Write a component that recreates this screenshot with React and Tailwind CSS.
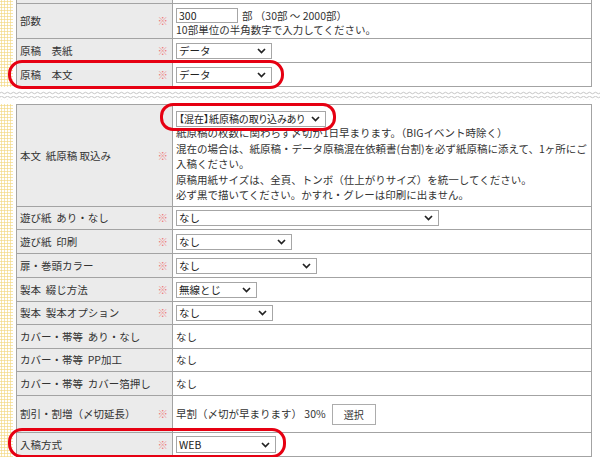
import React from "react";

// form table excerpt with red highlight marks
const Chevron = () => (
  <svg width="9" height="6" viewBox="0 0 9 6" className="shrink-0">
    <path d="M1 1l3.5 3.5L8 1" fill="none" stroke="#222" strokeWidth="1.7" />
  </svg>
);

const Sel = ({ w, h = "h-[16px]", tight = "", children }) => (
  <div className={`flex items-center justify-between border border-[#a6a6a6] bg-white pl-[2px] pr-[5px] ${w} ${h}`}>
    <span className={`whitespace-nowrap leading-[14px] text-[#222] ${tight}`}>{children}</span>
    <Chevron />
  </div>
);

const Row = ({ label, req, h, children, valueClass = "items-center" }) => (
  <div className={`flex border-b border-[#a3a3a3] ${h}`}>
    <div className="flex w-[156px] shrink-0 items-center justify-between border-r border-[#a3a3a3] bg-[#ebebeb] pl-[3px] pr-[4px]">
      <span className="whitespace-pre text-[#333]">{label}</span>
      {req && <span className="text-[#ee7b7b]">※</span>}
    </div>
    <div className={`flex flex-1 pl-[3px] ${valueClass}`}>{children}</div>
  </div>
);

const Dots = () => (
  <div className="w-[13px] shrink-0 bg-[radial-gradient(circle,#f4dc8f_0.9px,transparent_1.3px)] bg-[length:3px_3px]" />
);

const Wave = () => (
  <svg width="600" height="17" className="block">
    <defs>
      <pattern id="wv" width="6" height="4" patternUnits="userSpaceOnUse">
        <path d="M0 2 Q1.5 0.5 3 2 T6 2" fill="none" stroke="#c4c4c4" strokeWidth="1" />
      </pattern>
    </defs>
    <rect x="0" y="4" width="600" height="4" fill="url(#wv)" />
    <rect x="0" y="9" width="600" height="4" fill="url(#wv)" />
  </svg>
);

export default function App() {
  return (
    <div className="relative h-[457px] w-[600px] overflow-hidden bg-white text-[10.5px] text-[#333] font-['Noto_Sans_CJK_JP','Noto_Sans',sans-serif]">
      {/* upper part */}
      <div className="flex h-[87px]">
        <Dots />
        <div className="w-[3px] shrink-0" />
        <div className="w-[576px] border-x border-[#a3a3a3]">
          <Row label="" h="h-[4px]" />
          <Row label="部数" req h="h-[35px]" valueClass="flex-col items-start pt-[4px]">
            <div className="flex items-center">
              <div className="flex h-[15px] w-[62px] items-center border border-[#a6a6a6] pl-[2px] text-[#222]">300</div>
              <span className="ml-[4px] whitespace-pre">部 （30部 ～ 2000部）</span>
            </div>
            <div className="leading-[12px]">10部単位の半角数字で入力してください。</div>
          </Row>
          <Row label="原稿　表紙" req h="h-[24px]">
            <Sel w="w-[96px]">データ</Sel>
          </Row>
          <Row label="原稿　本文" req h="h-[24px]">
            <Sel w="w-[96px]">データ</Sel>
          </Row>
        </div>
      </div>

      <Wave />

      {/* lower part */}
      <div className="flex h-[353px]">
        <Dots />
        <div className="w-[3px] shrink-0" />
        <div className="w-[576px] border-x border-t border-[#a3a3a3]">
          <Row label="本文  紙原稿 取込み" req h="h-[102px]" valueClass="flex-col items-start pt-[6px] pl-[2px]">
            <Sel w="w-[150px]" tight="text-[10px] [font-feature-settings:'palt']">【混在】紙原稿の取り込みあり</Sel>
            <div className="-mt-[2px] leading-[15.6px]">
              <div>紙原稿の枚数に関わらず〆切が1日早まります。（BIGイベント時除く）</div>
              <div className="whitespace-nowrap">混在の場合は、紙原稿・データ原稿混在依頼書(台割)を必ず紙原稿に添えて、1ヶ所にご</div>
              <div>入稿ください。</div>
              <div>原稿用紙サイズは、全頁、トンボ（仕上がりサイズ）を統一してください。</div>
              <div>必ず黒で描いてください。かすれ・グレーは印刷に出ません。</div>
            </div>
          </Row>
          <Row label="遊び紙  あり・なし" req h="h-[23px]">
            <Sel w="w-[263px]">なし</Sel>
          </Row>
          <Row label="遊び紙  印刷" req h="h-[24px]">
            <Sel w="w-[116px]">なし</Sel>
          </Row>
          <Row label="扉・巻頭カラー" req h="h-[24px]">
            <Sel w="w-[141px]">なし</Sel>
          </Row>
          <Row label="製本  綴じ方法" req h="h-[24px]">
            <Sel w="w-[81px]">無線とじ</Sel>
          </Row>
          <Row label="製本  製本オプション" req h="h-[23px]">
            <Sel w="w-[97px]">なし</Sel>
          </Row>
          <Row label="カバー・帯等  あり・なし" h="h-[24px]">
            <span>なし</span>
          </Row>
          <Row label="カバー・帯等  PP加工" h="h-[23px]">
            <span>なし</span>
          </Row>
          <Row label="カバー・帯等  カバー箔押し" h="h-[24px]">
            <span>なし</span>
          </Row>
          <Row label="割引・割増（〆切延長）" req h="h-[37px]">
            <span className="whitespace-pre">早割（〆切が早まります） 30%</span>
            <button className="ml-[6px] flex h-[21px] w-[44px] items-center justify-center border border-[#acacac] bg-white text-[10px] text-[#333]">
              選択
            </button>
          </Row>
          <Row label="入稿方式" req h="h-[24px]">
            <Sel w="w-[100px]" h="h-[17px]">WEB</Sel>
          </Row>
        </div>
      </div>

      {/* red marks */}
      <div className="absolute left-[8px] top-[60px] h-[29px] w-[276px] rounded-[14px] border-[3px] border-[#e60012]" />
      <div className="absolute left-[160px] top-[103px] h-[28px] w-[176px] rounded-[13px] border-[3px] border-[#e60012]" />
      <div className="absolute left-[8px] top-[428px] h-[30px] w-[278px] rounded-[14px] border-[3px] border-[#e60012]" />
    </div>
  );
}
